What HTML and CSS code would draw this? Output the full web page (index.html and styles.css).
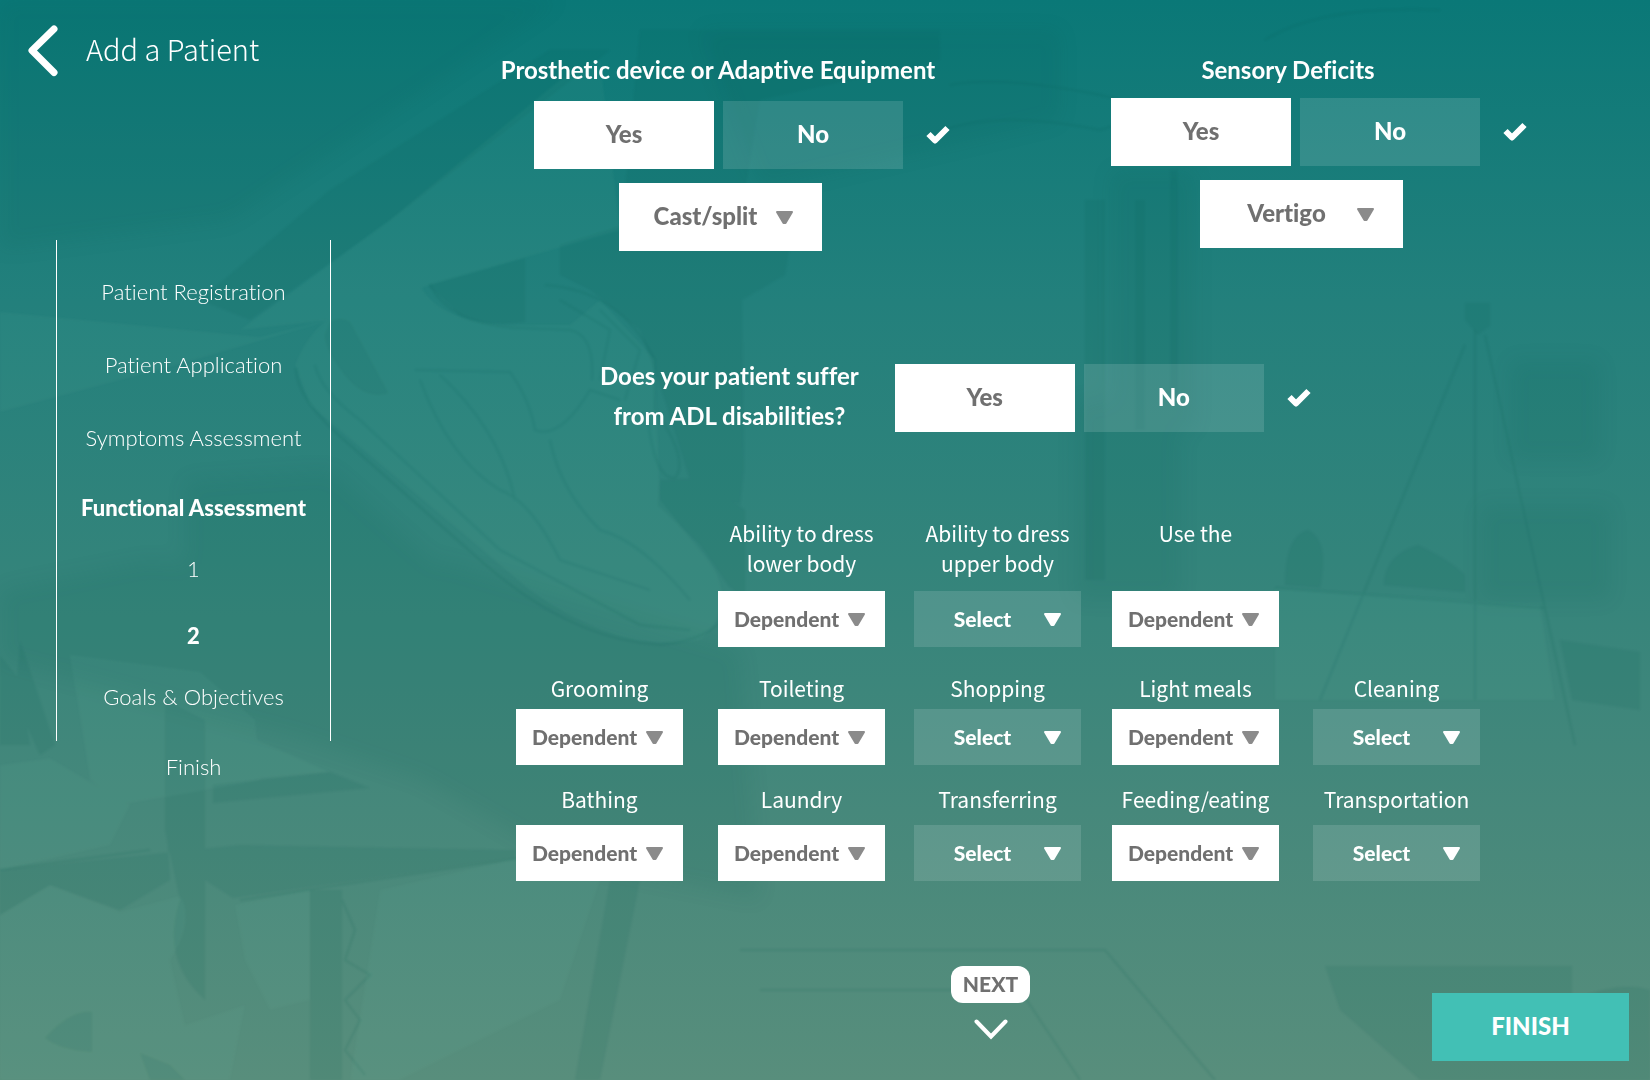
FILE: index.html
```html
<!DOCTYPE html>
<html lang="en">
<head>
    <meta charset="UTF-8">
    <meta name="viewport" content="width=device-width, initial-scale=1.0">
    <title>Add a Patient</title>
    <link rel="stylesheet" href="styles.css">
</head>
<body>
    <!-- Background scene -->
    <svg class="scene" viewBox="0 0 1650 1080" preserveAspectRatio="xMidYMid slice" aria-hidden="true">
        <defs>
            <filter id="soft" x="-5%" y="-5%" width="110%" height="110%"><feGaussianBlur stdDeviation="1"/></filter>
            <filter id="softer" x="-10%" y="-10%" width="120%" height="120%"><feGaussianBlur stdDeviation="10"/></filter>
        </defs>
        <g class="shade" filter="url(#softer)">
            <path d="M0 0H560L230 220L0 250Z"/>
            <path d="M700 30H1060V120L760 190Z"/>
            <path d="M440 560L740 650L760 900L560 860L420 780Z"/>
            <path d="M0 590L150 560L450 600V790L300 740L0 660Z"/>
            <path d="M185 480L330 470L500 620L450 700L185 640Z"/>
            <path d="M1110 170H1195V430H1110ZM1075 400H1180V600H1075Z"/>
            <path d="M1510 360H1600V460H1510ZM1480 505H1610V600H1480Z"/>
        </g>
        <g class="shade" filter="url(#soft)">
            <path d="M550 50L610 50L390 220L250 320L200 300L330 190Z"/>
            <path d="M640 30H940V60L760 100L745 190L620 245Z"/>
            <path d="M560 245L640 220L790 245L785 275L742 300L744 470L740 505L690 480L665 400L640 330L590 290L560 275Z"/>
            <path d="M330 322Q340 316 350 322L388 393Q365 400 345 375Q325 350 325 335Z"/>
            <path d="M428 285L525 258V322Q490 328 460 315Z"/>
            <path d="M660 480L700 478L745 510V600L728 585L700 545L658 505Z"/>
            <path d="M1085 200H1105V580H1085ZM1135 200H1145V430H1135ZM1170 170H1178V400H1170Z"/>
            <path d="M0 655L20 680L30 745H0ZM20 640L55 745L40 755L15 700Z"/>
            <path d="M165 700L205 720V1000Q160 960 180 900L165 830Z"/>
            <path d="M0 870L240 845L515 850L515 858L233 898L205 880L205 780L165 800L170 880L120 910L50 885L0 915Z"/>
            <path d="M310 890H342V1080H310ZM610 880H640L600 1080H575Z"/>
            <path d="M213 785L330 772L370 788L213 803Z"/>
            <path d="M1325 966H1572V1000Q1620 980 1650 990V1080H1420L1340 1010Z"/>
            <path d="M1285 585Q1285 535 1308 530Q1330 540 1320 588ZM1384 585Q1384 555 1418 545Q1450 560 1465 575V592Z"/>
            <path d="M1560 640L1640 652V710L1572 700Z"/>
            <path d="M45 1038Q70 1010 92 1012V1052Q60 1050 45 1038ZM140 1053L170 1065L185 1080H150Z"/>
            <path d="M1465 303H1490V326L1478 335L1465 320Z"/>
        </g>
        <g class="light" filter="url(#soft)">
            <path d="M560 80L600 60L620 230L430 285L330 320L240 330L390 220Z"/>
            <path d="M0 312L260 337L345 316L180 364L0 412Z"/>
            <path d="M295 365Q310 325 345 310L420 285Q440 325 520 325L570 325L600 300L655 360L660 500L700 550Q745 600 700 640Q620 655 530 590L310 405Z"/>
            <path d="M70 655L200 672L255 720L260 780L120 805L90 780Z"/>
            <path d="M200 715L330 772L213 783Z"/>
            <path d="M0 765L50 758L130 805L110 845L0 870Z"/>
            <path d="M0 915L50 885L120 912L180 896Q195 920 170 960L185 1025L245 1005L230 1080H0Z"/>
            <path d="M235 905L310 890V1000L270 1010L245 960Z"/>
            <path d="M1275 588L1540 605L1555 700H1275Z"/>
            <path d="M380 890L520 858L600 880L560 1000L400 1080H350Z"/>
        </g>
        <g class="sketch" filter="url(#soft)">
            <path d="M296 368Q296 400 350 445L480 560Q570 640 660 645Q710 640 726 615"/>
            <path d="M315 365Q320 390 360 420L500 550L640 625L690 630"/>
            <path d="M430 285Q450 325 520 328L570 330Q595 335 592 380"/>
            <path d="M415 370L510 372Q530 400 535 430Q560 440 590 390L620 400"/>
            <path d="M440 375Q500 430 515 500M420 380Q450 460 500 490Q530 500 560 560L650 590"/>
            <path d="M550 440Q560 490 600 530Q640 540 690 600"/>
            <path d="M545 285Q620 290 655 360V410Q690 460 675 478Q655 480 648 420"/>
            <path d="M560 300L610 330L600 380M600 310L640 350L625 400"/>
            <path d="M342 900L355 930L345 960L370 975L345 1000L360 1020L345 1050L365 1075"/>
            <path d="M1465 345L1320 700M1485 335L1575 745M1475 330V700M1275 588L1545 608"/>
            <path d="M740 950H1105L1215 1080M760 990H1020L1080 1080"/>
            <path d="M0 870L150 850M240 900L520 858"/>
            <path d="M1265 40Q1320 5 1440 10M950 85Q1000 75 1100 95Q1170 110 1100 130Q1000 110 945 130"/>
        </g>
    </svg>

    <div class="page">
        <aside class="sidebar">
            <header class="header">
                <a href="#" class="back" aria-label="Back">
                    <svg width="30" height="52" viewBox="0 0 30 52"><path d="M26 4L4 25.500L26 47.500"/></svg>
                </a>
                <h1>Add a Patient</h1>
            </header>
            <nav class="steps">
                <ol class="step-list">
                    <li><a href="#">Patient Registration</a></li>
                    <li><a href="#">Patient Application</a></li>
                    <li><a href="#">Symptoms Assessment</a></li>
                    <li class="current">
                        <a href="#">Functional Assessment</a>
                        <ol class="substeps">
                            <li><a href="#">1</a></li>
                            <li class="active"><a href="#" aria-current="step">2</a></li>
                        </ol>
                    </li>
                    <li class="after-substeps"><a href="#">Goals &amp; Objectives</a></li>
                </ol>
                <a href="#" class="last-step">Finish</a>
            </nav>
        </aside>

        <form class="main">
            <div class="assessment">
                <div class="questions">
                    <fieldset class="question">
                        <legend>Prosthetic device or Adaptive Equipment</legend>
                        <div class="toggle">
                            <label class="option"><input type="radio" name="prosthetic" checked>Yes</label>
                            <label class="option"><input type="radio" name="prosthetic">No</label>
                            <svg class="check" width="24" height="20" viewBox="0 0 24 20"><path d="M2.500 9L9 15.500L21.500 3"/></svg>
                        </div>
                        <div class="dropdown dropdown-large filled">
                            <select aria-label="Device"><option>Cast/split</option></select>
                            <svg class="arrow" width="19" height="14" viewBox="0 0 19 14"><path d="M2 1H17L10.500 12H8.500Z"/></svg>
                        </div>
                    </fieldset>
                    <fieldset class="question question-tight">
                        <legend>Sensory Deficits</legend>
                        <div class="toggle">
                            <label class="option"><input type="radio" name="sensory" checked>Yes</label>
                            <label class="option"><input type="radio" name="sensory">No</label>
                            <svg class="check" width="24" height="20" viewBox="0 0 24 20"><path d="M2.500 9L9 15.500L21.500 3"/></svg>
                        </div>
                        <div class="dropdown dropdown-large filled">
                            <select aria-label="Deficit"><option>Vertigo</option></select>
                            <svg class="arrow" width="19" height="14" viewBox="0 0 19 14"><path d="M2 1H17L10.500 12H8.500Z"/></svg>
                        </div>
                    </fieldset>
                </div>

                <div class="adl" role="radiogroup" aria-labelledby="adlText">
                    <p id="adlText">Does your patient suffer<br>from ADL disabilities?</p>
                    <div class="toggle">
                        <label class="option"><input type="radio" name="adl" checked>Yes</label>
                        <label class="option"><input type="radio" name="adl">No</label>
                        <svg class="check" width="24" height="20" viewBox="0 0 24 20"><path d="M2.500 9L9 15.500L21.500 3"/></svg>
                    </div>
                </div>

                <div class="abilities abilities-first">
                    <div class="ability second-column">
                        <label for="lowerBody">Ability to dress<br>lower body</label>
                        <div class="dropdown filled">
                            <select id="lowerBody"><option>Dependent</option></select>
                            <svg class="arrow" width="19" height="14" viewBox="0 0 19 14"><path d="M2 1H17L10.500 12H8.500Z"/></svg>
                        </div>
                    </div>
                    <div class="ability">
                        <label for="upperBody">Ability to dress<br>upper body</label>
                        <div class="dropdown">
                            <select id="upperBody"><option>Select</option></select>
                            <svg class="arrow" width="19" height="14" viewBox="0 0 19 14"><path d="M2 1H17L10.500 12H8.500Z"/></svg>
                        </div>
                    </div>
                    <div class="ability">
                        <label for="useThe">Use the</label>
                        <div class="dropdown filled">
                            <select id="useThe"><option>Dependent</option></select>
                            <svg class="arrow" width="19" height="14" viewBox="0 0 19 14"><path d="M2 1H17L10.500 12H8.500Z"/></svg>
                        </div>
                    </div>
                </div>

                <div class="abilities abilities-second">
                    <div class="ability">
                        <label for="grooming">Grooming</label>
                        <div class="dropdown filled">
                            <select id="grooming"><option>Dependent</option></select>
                            <svg class="arrow" width="19" height="14" viewBox="0 0 19 14"><path d="M2 1H17L10.500 12H8.500Z"/></svg>
                        </div>
                    </div>
                    <div class="ability">
                        <label for="toileting">Toileting</label>
                        <div class="dropdown filled">
                            <select id="toileting"><option>Dependent</option></select>
                            <svg class="arrow" width="19" height="14" viewBox="0 0 19 14"><path d="M2 1H17L10.500 12H8.500Z"/></svg>
                        </div>
                    </div>
                    <div class="ability">
                        <label for="shopping">Shopping</label>
                        <div class="dropdown">
                            <select id="shopping"><option>Select</option></select>
                            <svg class="arrow" width="19" height="14" viewBox="0 0 19 14"><path d="M2 1H17L10.500 12H8.500Z"/></svg>
                        </div>
                    </div>
                    <div class="ability">
                        <label for="lightMeals">Light meals</label>
                        <div class="dropdown filled">
                            <select id="lightMeals"><option>Dependent</option></select>
                            <svg class="arrow" width="19" height="14" viewBox="0 0 19 14"><path d="M2 1H17L10.500 12H8.500Z"/></svg>
                        </div>
                    </div>
                    <div class="ability">
                        <label for="cleaning">Cleaning</label>
                        <div class="dropdown">
                            <select id="cleaning"><option>Select</option></select>
                            <svg class="arrow" width="19" height="14" viewBox="0 0 19 14"><path d="M2 1H17L10.500 12H8.500Z"/></svg>
                        </div>
                    </div>
                </div>

                <div class="abilities abilities-third">
                    <div class="ability">
                        <label for="bathing">Bathing</label>
                        <div class="dropdown filled">
                            <select id="bathing"><option>Dependent</option></select>
                            <svg class="arrow" width="19" height="14" viewBox="0 0 19 14"><path d="M2 1H17L10.500 12H8.500Z"/></svg>
                        </div>
                    </div>
                    <div class="ability">
                        <label for="laundry">Laundry</label>
                        <div class="dropdown filled">
                            <select id="laundry"><option>Dependent</option></select>
                            <svg class="arrow" width="19" height="14" viewBox="0 0 19 14"><path d="M2 1H17L10.500 12H8.500Z"/></svg>
                        </div>
                    </div>
                    <div class="ability">
                        <label for="transferring">Transferring</label>
                        <div class="dropdown">
                            <select id="transferring"><option>Select</option></select>
                            <svg class="arrow" width="19" height="14" viewBox="0 0 19 14"><path d="M2 1H17L10.500 12H8.500Z"/></svg>
                        </div>
                    </div>
                    <div class="ability">
                        <label for="feeding">Feeding/eating</label>
                        <div class="dropdown filled">
                            <select id="feeding"><option>Dependent</option></select>
                            <svg class="arrow" width="19" height="14" viewBox="0 0 19 14"><path d="M2 1H17L10.500 12H8.500Z"/></svg>
                        </div>
                    </div>
                    <div class="ability">
                        <label for="transportation">Transportation</label>
                        <div class="dropdown">
                            <select id="transportation"><option>Select</option></select>
                            <svg class="arrow" width="19" height="14" viewBox="0 0 19 14"><path d="M2 1H17L10.500 12H8.500Z"/></svg>
                        </div>
                    </div>
                </div>
            </div>

            <footer class="footer">
                <div class="next">
                    <button type="button" class="next-button">NEXT</button>
                    <svg width="34" height="21" viewBox="0 0 34 21"><path d="M2.500 2.500L17 17.500L31.500 2.500"/></svg>
                </div>
                <button type="submit" class="finish-button">FINISH</button>
            </footer>
        </form>
    </div>
</body>
</html>
```
FILE: styles.css
```css
* {
    box-sizing: border-box;
}
body {
    margin: 0;
    min-height: 100vh;
    font-family: Lato, "Open Sans", sans-serif;
    font-variant-ligatures: none;
    color: #fff;
    background: linear-gradient(#0a7877 0%, #23807c 28%, #33847b 52%, #46887b 75%, #588e7c 100%);
}
a {
    color: inherit;
    text-decoration: none;
}
.scene {
    position: fixed;
    top: 0;
    left: 0;
    width: 100%;
    height: 100%;
    z-index: -1;
}
.shade {
    fill: #00594f;
    opacity: 0.09;
}
.light {
    fill: #7fc4b0;
    opacity: 0.06;
}
.sketch {
    fill: none;
    stroke: #005a50;
    stroke-width: 2;
    opacity: 0.12;
}
.page {
    display: grid;
    grid-template-columns: 352px 1fr;
    min-height: 100vh;
}

/* Sidebar */
.header {
    display: flex;
    align-items: center;
    gap: 28px;
    padding: 25px 0 0 28px;
}
.header h1 {
    margin: 0;
    padding-bottom: 6px;
    font-family: "Noto Sans CJK SC", "Noto Sans", sans-serif;
    font-size: 29px;
    font-weight: 200;
    line-height: 46px;
}
.back svg {
    display: block;
}
.back path {
    fill: none;
    stroke: #fff;
    stroke-width: 7;
    stroke-linecap: round;
    stroke-linejoin: round;
}
.steps {
    width: 275px;
    margin: 163px 0 0 56px;
    font-size: 22px;
    font-weight: 300;
    line-height: 30px;
    text-align: center;
}
.steps ol {
    margin: 0;
    padding: 0;
    list-style: none;
}
.steps a {
    display: block;
}
.steps .step-list {
    padding: 37px 0 29px;
    border-left: 1px solid #fff;
    border-right: 1px solid #fff;
}
.step-list > li + li {
    margin-top: 43px;
}
.step-list > li + .current {
    margin-top: 40px;
    font-weight: 900;
}
.steps .substeps {
    margin-top: 31px;
    font-weight: 300;
}
.substeps .active {
    margin-top: 37px;
    font-weight: 900;
}
.step-list > li + .after-substeps {
    margin-top: 31px;
}
.last-step {
    margin-top: 11px;
}

/* Form */
.main {
    display: flex;
    flex-direction: column;
    padding: 50px 6px 0 0;
}
.assessment {
    width: 964px;
    margin: 0 auto;
}
.questions {
    display: flex;
    justify-content: space-between;
    padding-left: 18px;
}
.question {
    display: flex;
    flex-direction: column;
    align-items: center;
    width: 369px;
    min-width: 0;
    margin: 0;
    padding: 0;
    border: 0;
}
.question legend {
    width: 460px;
    margin: 0 -46px 11px;
    padding: 0;
    font-size: 24px;
    font-weight: 700;
    line-height: 40px;
    text-align: center;
}
.question-tight legend {
    margin-bottom: 8px;
    padding-right: 14px;
}
.toggle {
    display: flex;
    align-items: center;
    gap: 9px;
    width: 369px;
}
.option {
    flex: 0 0 180px;
    height: 68px;
    font-size: 24px;
    font-weight: 900;
    line-height: 66px;
    text-align: center;
    background-color: rgba(255, 255, 255, 0.13);
    cursor: pointer;
}
.option input {
    position: absolute;
    opacity: 0;
}
.option:has(input:checked) {
    background-color: #fff;
    color: #707070;
}
.check {
    flex: none;
    margin-left: 14px;
}
.check path {
    fill: none;
    stroke: #fff;
    stroke-width: 6;
    stroke-linejoin: round;
}
.dropdown {
    position: relative;
    width: 167px;
}
.dropdown select {
    display: block;
    width: 100%;
    height: 56px;
    padding: 0 30px 2px 0;
    border: 0;
    border-radius: 0;
    appearance: none;
    background-color: rgba(255, 255, 255, 0.13);
    color: #fff;
    font-family: inherit;
    font-size: 21px;
    font-weight: 900;
    font-variant-ligatures: inherit;
    text-align: center;
    cursor: pointer;
}
.dropdown.filled select {
    background-color: #fff;
    color: #707070;
}
.dropdown-large {
    width: 203px;
    margin: 14px 0 0 4px;
}
.question-tight .dropdown-large {
    margin-left: 12px;
}
.dropdown-large select {
    height: 68px;
    padding-bottom: 4px;
    font-size: 24px;
}
.arrow {
    position: absolute;
    top: 50%;
    right: 19px;
    margin-top: -6px;
    pointer-events: none;
}
.dropdown-large .arrow {
    right: 28px;
}
.arrow path {
    fill: #fff;
    stroke: #fff;
    stroke-width: 2;
    stroke-linejoin: round;
}
.filled .arrow path {
    fill: #8b8b8b;
    stroke: #8b8b8b;
}
.adl {
    display: flex;
    align-items: center;
    gap: 36px;
    margin-top: 105px;
    padding-left: 84px;
}
.adl p {
    flex: 0 0 257px;
    margin: 0;
    padding-bottom: 4px;
    font-size: 24px;
    font-weight: 700;
    line-height: 40px;
    text-align: center;
    white-space: nowrap;
}
.abilities {
    display: grid;
    grid-template-columns: 202px 196px 198px 201px 167px;
}
.abilities-first {
    margin-top: 78px;
}
.abilities-second {
    margin-top: 26px;
}
.abilities-third {
    margin-top: 19px;
}
.ability {
    display: flex;
    flex-direction: column;
    justify-content: space-between;
    width: 167px;
}
.ability label {
    font-family: "Noto Sans CJK SC", "Noto Sans", sans-serif;
    font-size: 21px;
    line-height: 30px;
    text-align: center;
    white-space: nowrap;
}
.second-column {
    grid-column: 2;
}
.abilities-first label {
    margin-bottom: 13px;
}
.abilities-second label {
    margin-bottom: 6px;
}
.abilities-third label {
    margin-bottom: 11px;
}

/* Footer */
.footer {
    display: grid;
    grid-template-columns: 1fr auto 1fr;
    margin-top: auto;
    padding: 0 15px 19px 0;
}
.next {
    grid-column: 2;
    display: flex;
    flex-direction: column;
    align-items: center;
    gap: 16px;
    padding-bottom: 21px;
}
.next svg path {
    fill: none;
    stroke: #fff;
    stroke-width: 4;
    stroke-linecap: round;
}
.next-button {
    width: 79px;
    height: 37px;
    padding: 0 0 2px;
    border: 0;
    border-radius: 12px;
    background-color: #fff;
    color: #707070;
    font-family: inherit;
    font-size: 21px;
    font-weight: 900;
    cursor: pointer;
}
.finish-button {
    align-self: end;
    justify-self: end;
    width: 197px;
    height: 68px;
    padding-bottom: 4px;
    border: 0;
    background-color: #42c0b5;
    color: #fff;
    font-family: inherit;
    font-size: 24px;
    font-weight: 900;
    cursor: pointer;
}
```
